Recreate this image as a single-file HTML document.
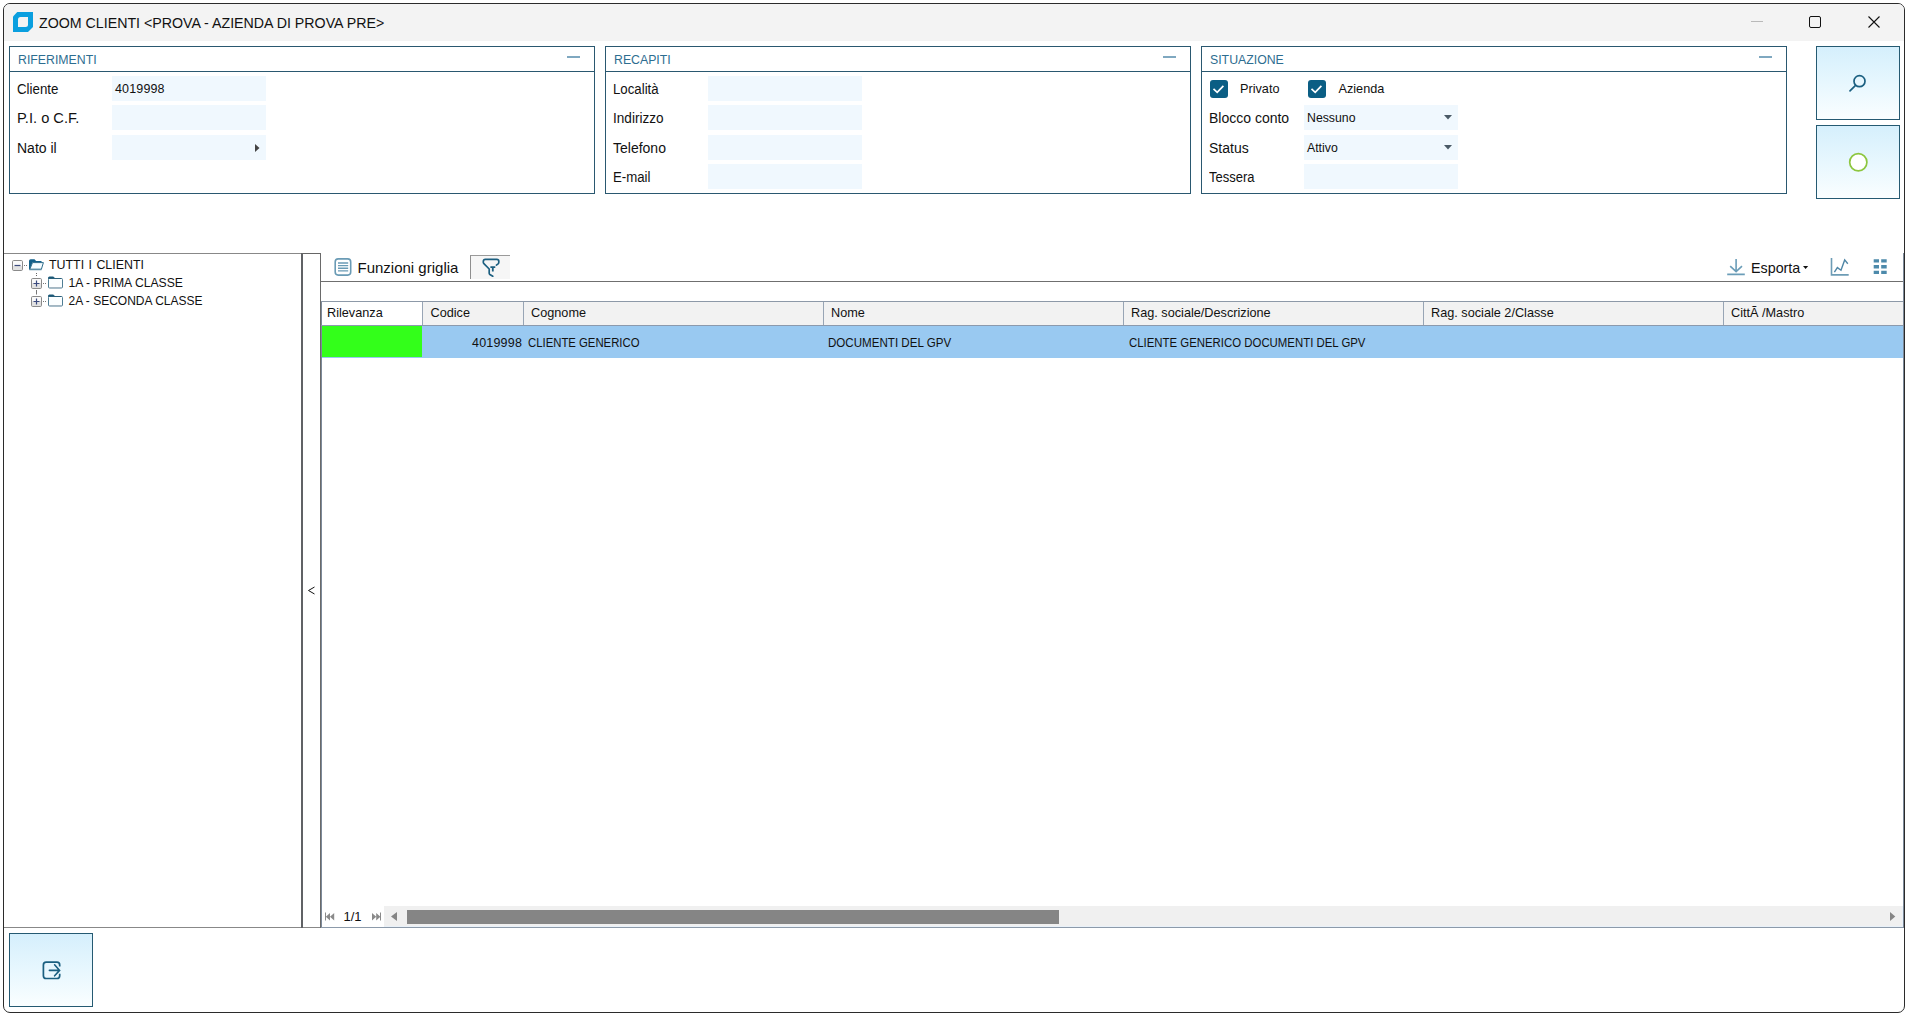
<!DOCTYPE html>
<html><head><meta charset="utf-8">
<style>
*{box-sizing:border-box;margin:0;padding:0}
html,body{width:1908px;height:1015px;overflow:hidden;background:#fff;font-family:"Liberation Sans",sans-serif;color:#111}
.a{position:absolute}
svg.a{overflow:visible}
.t{position:absolute;white-space:pre;line-height:1}
#win{left:3px;top:3px;width:1902px;height:1010px;border:1px solid #2b2b2b;border-radius:7px;overflow:hidden;background:#fff}
#tb{left:0;top:0;width:1900px;height:37px;background:#f3f3f3}
.pnl{top:46px;width:586px;height:148px;border:1px solid #2a5870}
.ph{left:0;top:0;width:584px;height:25px;border-bottom:1px solid #2a5870}
.pht{left:8px;top:7px;font-size:12.3px;color:#2d6d90}
.pmin{left:557px;top:9px;width:13px;height:2px;background:#7fa8c0}
.lbl{font-size:14px;color:#111}
.fld{position:absolute;width:154px;height:25px;background:#f0f8fe}
.fv{font-size:12.5px;color:#111;letter-spacing:0.15px}
.btn{position:absolute;left:1816px;width:84px;border:1px solid #255a72;background:linear-gradient(#d5effc,#e7f7fe 50%,#fafeff)}
.cb{position:absolute;width:18px;height:18px;border-radius:3px;background:#0b5e84}
.gh{font-size:12px;color:#111}
.cd{position:absolute;top:302px;width:1px;height:23px;background:#98a5b5}
</style></head><body>
<div id="win" class="a"><div id="tb" class="a"></div></div>

<!-- title -->
<svg class="a" style="left:13px;top:12px" width="20" height="20" viewBox="0 0 20 20">
  <path d="M4.3 0H20V15L15 20H0V4.5Z" fill="#0a9fdf"/>
  <path d="M7.5 5H15V12.5Q15 15 12.5 15H5V7.5Q5 5 7.5 5Z" fill="#f3f3f3"/>
</svg>
<div class="t" style="left:39px;top:15.3px;font-size:15px;color:#111;transform:scaleX(0.947);transform-origin:0 0">ZOOM CLIENTI &lt;PROVA - AZIENDA DI PROVA PRE&gt;</div>
<div class="a" style="left:1751px;top:21px;width:12px;height:1px;background:#b9b9b9"></div>
<div class="a" style="left:1809px;top:16px;width:12px;height:12px;border:1px solid #111;border-radius:2px"></div>
<svg class="a" style="left:1868px;top:16px" width="12" height="12" viewBox="0 0 12 12"><path d="M0.5 0.5L11.5 11.5M11.5 0.5L0.5 11.5" stroke="#111" stroke-width="1.1"/></svg>

<!-- panel 1 -->
<div class="a pnl" style="left:9px">
  <div class="a ph"><div class="t pht">RIFERIMENTI</div><div class="a pmin"></div></div>
</div>
<div class="t lbl" style="left:17px;top:82px;transform:scaleX(0.95);transform-origin:0 0">Cliente</div>
<div class="t lbl" style="left:17px;top:111px;transform:scaleX(1.045);transform-origin:0 0">P.I. o C.F.</div>
<div class="t lbl" style="left:17px;top:141px">Nato il</div>
<div class="fld" style="left:112px;top:76px"></div>
<div class="fld" style="left:112px;top:105px"></div>
<div class="fld" style="left:112px;top:135px"></div>
<div class="t fv" style="left:115px;top:83px">4019998</div>
<svg class="a" style="left:255px;top:144px" width="5" height="8" viewBox="0 0 5 8"><path d="M0 0L4.5 4L0 8Z" fill="#444"/></svg>

<!-- panel 2 -->
<div class="a pnl" style="left:605px">
  <div class="a ph"><div class="t pht">RECAPITI</div><div class="a pmin"></div></div>
</div>
<div class="t lbl" style="left:613px;top:82px;transform:scaleX(0.945);transform-origin:0 0">Località</div>
<div class="t lbl" style="left:613px;top:111px;transform:scaleX(0.97);transform-origin:0 0">Indirizzo</div>
<div class="t lbl" style="left:613px;top:141px">Telefono</div>
<div class="t lbl" style="left:613px;top:170px;transform:scaleX(0.945);transform-origin:0 0">E-mail</div>
<div class="fld" style="left:708px;top:76px"></div>
<div class="fld" style="left:708px;top:105px"></div>
<div class="fld" style="left:708px;top:135px"></div>
<div class="fld" style="left:708px;top:164px"></div>

<!-- panel 3 -->
<div class="a pnl" style="left:1201px">
  <div class="a ph"><div class="t pht">SITUAZIONE</div><div class="a pmin"></div></div>
</div>
<div class="cb" style="left:1210px;top:79.5px"><svg width="18" height="18" viewBox="0 0 18 18"><path d="M3.5 8.8L7.2 12.3L13.4 5.8" stroke="#fff" stroke-width="1.7" fill="none"/></svg></div>
<div class="t lbl" style="left:1240px;top:83px;font-size:12.7px">Privato</div>
<div class="cb" style="left:1308px;top:79.5px"><svg width="18" height="18" viewBox="0 0 18 18"><path d="M3.5 8.8L7.2 12.3L13.4 5.8" stroke="#fff" stroke-width="1.7" fill="none"/></svg></div>
<div class="t lbl" style="left:1338.5px;top:83px;font-size:12.7px">Azienda</div>
<div class="t lbl" style="left:1209px;top:111px">Blocco conto</div>
<div class="t lbl" style="left:1209px;top:141px">Status</div>
<div class="t lbl" style="left:1209px;top:170px;transform:scaleX(0.93);transform-origin:0 0">Tessera</div>
<div class="fld" style="left:1304px;top:105px"></div>
<div class="fld" style="left:1304px;top:135px"></div>
<div class="fld" style="left:1304px;top:164px"></div>
<div class="t fv" style="left:1307px;top:112px;font-size:12.3px;letter-spacing:0">Nessuno</div>
<div class="t fv" style="left:1307px;top:141.5px;font-size:12.3px;letter-spacing:0">Attivo</div>
<svg class="a" style="left:1444px;top:115px" width="8" height="5" viewBox="0 0 8 5"><path d="M0 0H8L4 4.5Z" fill="#4a5a66"/></svg>
<svg class="a" style="left:1444px;top:145px" width="8" height="5" viewBox="0 0 8 5"><path d="M0 0H8L4 4.5Z" fill="#4a5a66"/></svg>

<!-- side buttons -->
<div class="btn" style="top:46px;height:74px"></div>
<svg class="a" style="left:1844px;top:68px" width="30" height="30" viewBox="0 0 30 30"><circle cx="15.5" cy="13.15" r="5.5" stroke="#1a5f80" stroke-width="1.7" fill="none"/><path d="M11.3 17.6L6 22.8" stroke="#1a5f80" stroke-width="1.7" stroke-linecap="round"/></svg>
<div class="btn" style="top:125px;height:74px"></div>
<svg class="a" style="left:1848px;top:152px" width="21" height="21" viewBox="0 0 21 21"><circle cx="10.3" cy="10.3" r="8.6" stroke="#8dc63f" stroke-width="1.7" fill="#fff"/></svg>

<!-- tree -->
<div class="a" style="left:4px;top:253px;width:317px;height:1px;background:#888"></div>
<div class="a" style="left:4px;top:927px;width:317px;height:1px;background:#888"></div>
<div class="a" style="left:301px;top:253px;width:2px;height:675px;background:#606265"></div>
<div class="a" style="left:302px;top:253px;width:19px;height:1px;background:#666"></div>
<div class="a" style="left:320px;top:253px;width:1px;height:675px;background:#6a6a6a"></div>
<div class="a" style="left:321px;top:301px;width:1px;height:627px;background:#7d8a9a"></div>
<svg class="a" style="left:307px;top:586px" width="9" height="9" viewBox="0 0 9 9"><path d="M7.5 1L1.5 4.5L7.5 8" stroke="#111" stroke-width="1" fill="none"/></svg>

<svg class="a" style="left:0;top:250px" width="70" height="60" viewBox="0 0 70 60">
  <defs>
    <linearGradient id="bx" x1="0" y1="0" x2="0" y2="1"><stop offset="0.5" stop-color="#fafafa"/><stop offset="0.5" stop-color="#e2e2e2"/></linearGradient>
  </defs>
  <!-- minus box -->
  <rect x="12.5" y="10.5" width="10" height="10" rx="1.2" fill="url(#bx)" stroke="#8a8a8a"/>
  <path d="M14.5 15.5H20.5" stroke="#3b4a7e" stroke-width="1.2"/>
  <path d="M24 15.5H25M26 15.5H27" stroke="#777"/>
  <!-- open folder -->
  <path d="M29 11Q29 9.3 30.7 9.3H34.5L36.1 10.9H40.8Q41.8 10.9 41.8 11.9V12.7H32.4L29.9 19.4H29Z" fill="#13608a"/>
  <path d="M32.5 12.6H43.4L41.4 19.2H29.9Z" fill="#f6fcff" stroke="#2f6d8c" stroke-width="1" stroke-linejoin="round"/>
  <path d="M29.3 19.6H41.5" stroke="#5f8ea6" stroke-width="1.3"/>
  <!-- dotted vertical -->
  <path d="M36.5 23V27" stroke="#666" stroke-width="1" stroke-dasharray="1 1"/>
  <path d="M36.5 40V44.5" stroke="#777" stroke-width="1"/>
  <!-- plus boxes -->
  <rect x="31.5" y="28.5" width="10" height="10" rx="1.2" fill="url(#bx)" stroke="#8a8a8a"/>
  <path d="M33.5 33.5H39.5M36.5 30.5V36.5" stroke="#3b4a7e" stroke-width="1.2"/>
  <path d="M43 33.5H44M45 33.5H46" stroke="#777"/>
  <rect x="31.5" y="46.5" width="10" height="10" rx="1.2" fill="url(#bx)" stroke="#8a8a8a"/>
  <path d="M33.5 51.5H39.5M36.5 48.5V54.5" stroke="#3b4a7e" stroke-width="1.2"/>
  <path d="M43 51.5H44M45 51.5H46" stroke="#777"/>
  <!-- closed folders -->
  <rect x="48.5" y="28.5" width="14" height="9.5" rx="1" fill="#fbfeff" stroke="#4f7d94"/>
  <path d="M48.5 28.5V27.8Q48.5 27 49.3 27H53.5L54.5 28.5Z" fill="#1a5878" stroke="#1a5878" stroke-width="1"/>
  <path d="M49 37.5H62" stroke="#a3b6c2" stroke-width="1"/>
  <path d="M48.5 28.5H61.5" stroke="#2a5f7a" stroke-width="1"/>
  <rect x="48.5" y="46.5" width="14" height="9.5" rx="1" fill="#fbfeff" stroke="#4f7d94"/>
  <path d="M48.5 46.5V45.8Q48.5 45 49.3 45H53.5L54.5 46.5Z" fill="#1a5878" stroke="#1a5878" stroke-width="1"/>
  <path d="M49 55.5H62" stroke="#a3b6c2" stroke-width="1"/>
  <path d="M48.5 46.5H61.5" stroke="#2a5f7a" stroke-width="1"/>
</svg>
<div class="t gh" style="left:49px;top:259px;font-size:12.4px;word-spacing:1px">TUTTI I CLIENTI</div>
<div class="t gh" style="left:68.5px;top:277px;font-size:12.2px">1A - PRIMA CLASSE</div>
<div class="t gh" style="left:68.5px;top:295px">2A - SECONDA CLASSE</div>

<!-- grid toolbar -->
<div class="a" style="left:321px;top:281px;width:1583px;height:1px;background:#6f6f6f"></div>
<svg class="a" style="left:330px;top:254px" width="30" height="26" viewBox="0 0 30 26">
  <rect x="5.2" y="4.9" width="15.5" height="16.2" rx="3" fill="#fff" stroke="#6a9bb5" stroke-width="1.6"/>
  <path d="M8 9H18.2M8 11.6H18.2M8 14.3H18.2M8 16.9H18.2" stroke="#6a9bb5" stroke-width="1.4"/>
</svg>
<div class="t" style="left:357.5px;top:260.3px;font-size:15px;color:#111">Funzioni griglia</div>
<div class="a" style="left:470px;top:255px;width:40px;height:24px;border-left:1px solid #8f8f8f;border-top:1px solid #9a9a9a;background:#f6f6f6"></div>
<svg class="a" style="left:466px;top:252px" width="48" height="32" viewBox="0 0 48 32">
  <path d="M30.4 13.1L32.1 11.9Q32.8 11.3 32.8 10.2V9.3Q32.8 7.3 30.8 7.3H19.4Q17.3 7.3 17.3 9.4V10.2Q17.3 11 17.9 11.6L23.2 17V21.2Q23.2 22 23.9 22.5L26.8 24.2" fill="none" stroke="#1c5f80" stroke-width="1.7" stroke-linecap="round" stroke-linejoin="round"/>
  <path d="M24.4 15.1H29.3M26.8 15.1V19.6" stroke="#1c5f80" stroke-width="1.8"/>
</svg>
<svg class="a" style="left:1720px;top:254px" width="96" height="28" viewBox="0 0 96 28">
  <path d="M16.1 5V17.4M10.2 12.2L16.1 17.6L22 12.2M7.2 20.4H24.8" fill="none" stroke="#6b9db8" stroke-width="1.6"/>
  <path d="M83 12H88.2L85.6 14.9Z" fill="#111"/>
</svg>
<div class="t" style="left:1751px;top:260.6px;font-size:14.3px;color:#111">Esporta</div>
<svg class="a" style="left:1826px;top:252px" width="70" height="30" viewBox="0 0 70 30">
  <path d="M5.5 6V22.9H22.7" fill="none" stroke="#6d9cb5" stroke-width="1.6"/>
  <path d="M8.4 20.2L11.4 15.6L15 18.2L18.7 7.9L21.8 11.7" fill="none" stroke="#4f86a6" stroke-width="1.4"/>
  <path d="M47.7 7.2h5.3v3.4h-5.3zM55.2 7.2h5.5v3.4h-5.5zM47.7 13h5.3v3.5h-5.3zM55.2 13h5.5v3.5h-5.5zM47.7 18.7h5.3v3.3h-5.3zM55.2 18.7h5.5v3.3h-5.5z" fill="#4d8aab"/>
</svg>

<!-- grid -->
<div class="a" style="left:321px;top:301px;width:1583px;height:1px;background:#8d99a8"></div>
<div class="a" style="left:322px;top:302px;width:1581px;height:23px;background:#f2f2f2"></div>
<div class="a" style="left:322px;top:302px;width:100px;height:23px;background:#fff"></div>
<div class="a" style="left:321px;top:325px;width:1583px;height:1px;background:#8c9aad"></div>
<div class="cd" style="left:422px"></div>
<div class="cd" style="left:523px"></div>
<div class="cd" style="left:823px"></div>
<div class="cd" style="left:1123px"></div>
<div class="cd" style="left:1423px"></div>
<div class="cd" style="left:1723px"></div>
<div class="t gh" style="left:327px;top:307px;font-size:12.7px">Rilevanza</div>
<div class="t gh" style="left:430.5px;top:307px;font-size:12.7px">Codice</div>
<div class="t gh" style="left:531px;top:307px;font-size:12.7px">Cognome</div>
<div class="t gh" style="left:831px;top:307px;font-size:12.7px">Nome</div>
<div class="t gh" style="left:1131px;top:307px;font-size:12.7px">Rag. sociale/Descrizione</div>
<div class="t gh" style="left:1431px;top:307px;font-size:12.7px">Rag. sociale 2/Classe</div>
<div class="t gh" style="left:1731px;top:307px;font-size:12.7px">CittÃ /Mastro</div>

<div class="a" style="left:322px;top:326px;width:1581px;height:32px;background:#99c9f1"></div>
<div class="a" style="left:322px;top:326px;width:100px;height:31px;background:#33ff1a"></div>
<div class="t gh" style="left:472px;top:337px;font-size:12.5px;letter-spacing:0.2px">4019998</div>
<div class="t gh" style="left:528.3px;top:337px;font-size:12px;transform:scaleX(0.945);transform-origin:0 0">CLIENTE GENERICO</div>
<div class="t gh" style="left:828.3px;top:337px;font-size:12px;transform:scaleX(0.965);transform-origin:0 0">DOCUMENTI DEL GPV</div>
<div class="t gh" style="left:1128.5px;top:337px;font-size:12px;transform:scaleX(0.95);transform-origin:0 0">CLIENTE GENERICO DOCUMENTI DEL GPV</div>

<!-- pager / scrollbar -->
<svg class="a" style="left:320px;top:905px" width="70" height="22" viewBox="0 0 70 22">
  <path d="M5.5 7.5V15.5" stroke="#8a8a8a" stroke-width="1"/>
  <path d="M10 8V15.5L5.8 11.75Z M14.2 8V15.5L10 11.75Z" fill="#8a8a8a"/>
  <path d="M60.5 7.5V15.5" stroke="#8a8a8a" stroke-width="1"/>
  <path d="M52 8V15.5L56.2 11.75Z M56.2 8V15.5L60.4 11.75Z" fill="#8a8a8a"/>
</svg>
<div class="t gh" style="left:343.5px;top:909.6px;font-size:13px">1/1</div>
<div class="a" style="left:384px;top:906px;width:1519px;height:21px;background:#f0f0f0;border-right:1px solid #e9f1f9;border-bottom:1px solid #e9f1f9"></div>
<div class="a" style="left:407px;top:910px;width:652px;height:14px;background:#858585"></div>
<svg class="a" style="left:391px;top:912px" width="7" height="9" viewBox="0 0 7 9"><path d="M6 0V9L0 4.5Z" fill="#858585"/></svg>
<svg class="a" style="left:1890px;top:912px" width="6" height="9" viewBox="0 0 6 9"><path d="M0 0V9L5.3 4.5Z" fill="#858585"/></svg>
<div class="a" style="left:321px;top:927px;width:1583px;height:1px;background:#8c9aaa"></div>
<div class="a" style="left:1903px;top:253px;width:1px;height:675px;background:#7d8a9a"></div>

<!-- exit button -->
<div class="btn" style="left:9px;top:933px;width:84px;height:74px"></div>
<svg class="a" style="left:36px;top:955px" width="32" height="30" viewBox="0 0 32 30">
  <path d="M23.7 11.6V9.9Q23.7 7.1 20.9 7.1H10.2Q7.4 7.1 7.4 9.9V20.7Q7.4 23.5 10.2 23.5H20.9Q23.7 23.5 23.7 20.7V18.8" fill="none" stroke="#1a5f80" stroke-width="1.7"/>
  <path d="M13.4 15.4H23.4M18.6 9.8L23.6 15.4L18.6 20.8" fill="none" stroke="#1a5f80" stroke-width="1.6" stroke-linecap="round"/>
</svg>
</body></html>
